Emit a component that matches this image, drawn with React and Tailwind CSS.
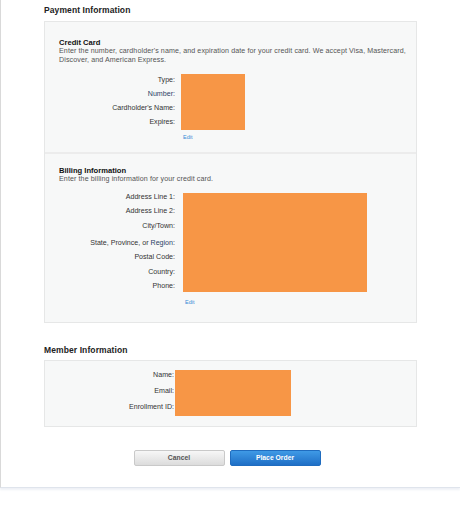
import React from 'react';

const font = { fontFamily: '"Liberation Sans", Arial, sans-serif' };

function Orange({ className }) {
  return <div className={`bg-[#f79646] ${className}`} />;
}

function Labels({ items, className = '' }) {
  return (
    <div className={`flex flex-col items-end text-[7.1px] text-[#333] ${className}`}>
      {items.map(([label, cls], i) => (
        <div key={i} className={`flex items-center ${cls}`}>{label}</div>
      ))}
    </div>
  );
}

function Edit({ className = 'mt-[4px]' }) {
  return <div className={`text-[5.5px] text-[#3a8ad6] ml-[2px] leading-none ${className}`}>Edit</div>;
}

export default function App() {
  return (
    <div className="w-[460px] h-[531px] bg-white" style={font}>
      <div className="h-[488px] border-l border-l-[#d9d9d9] border-b border-b-[#dfe4ec] shadow-[0_2px_2px_#eef1f6] pl-[43px] pr-[43px]">
        {/* payment */}
        <h2 className="pt-[5px] h-[21px] text-[8.5px] font-bold tracking-[0.1px] text-[#222] leading-[10px]">Payment Information</h2>

        <div className="border border-[#e6e7e7] bg-[#f7f8f8]">
          {/* credit card */}
          <div className="px-[14px] pt-[16px] h-[130px]">
            <div className="text-[7.6px] font-bold text-[#111] leading-[9px]">Credit Card</div>
            <p className="text-[7.1px] tracking-[0.1px] text-[#555] leading-[9px] w-[355px]">
              Enter the number, cardholder's name, and expiration date for your credit card. We accept Visa, Mastercard, Discover, and American Express.
            </p>
            <div className="flex mt-[8px]">
              <Labels
                className="w-[116px]"
                items={[['Type:', 'h-[14px]'], ['Number:', 'h-[14px] text-[#2b3f66]'], ["Cardholder's Name:", 'h-[14px]'], ['Expires:', 'h-[15px]']]}
              />
              <div className="ml-[6px] pt-[1px]">
                <Orange className="w-[64px] h-[56px]" />
                <Edit className="mt-[5px]" />
              </div>
            </div>
          </div>
          <div className="h-[2px] bg-[#ececec]" />
          {/* billing */}
          <div className="px-[14px] pt-[12px] h-[168px]">
            <div className="text-[7.6px] font-bold text-[#111] leading-[9px]">Billing Information</div>
            <p className="text-[7.1px] tracking-[0.1px] text-[#555] leading-[9px]">Enter the billing information for your credit card.</p>
            <div className="flex mt-[6px]">
              <Labels
                className="w-[116px]"
                items={[
                  ['Address Line 1:', 'h-[14.5px]'],
                  ['Address Line 2:', 'h-[14.5px]'],
                  ['City/Town:', 'h-[14.5px]'],
                  [<span>State, Province, or <span className="text-[#2b3f66]">Region</span>:</span>, 'h-[17px] pt-[3px]'],
                  ['Postal Code:', 'h-[14.5px]'],
                  ['Country:', 'h-[14.5px]'],
                  ['Phone:', 'h-[14.5px]'],
                ]}
              />
              <div className="ml-[8px] pt-[3px]">
                <Orange className="w-[184px] h-[99px]" />
                <Edit className="mt-[8px]" />
              </div>
            </div>
          </div>
        </div>

        {/* member */}
        <h2 className="mt-[22px] h-[11px] text-[8.5px] font-bold tracking-[0.1px] text-[#222] leading-[10px]">Member Information</h2>
        <div className="mt-[4px] border border-[#e6e7e7] bg-[#f7f8f8] h-[67px] px-[14px] pt-[6px]">
          <div className="flex">
            <Labels
              className="w-[115px]"
              items={[['Name:', 'h-[16px]'], ['Email:', 'h-[16px]'], ['Enrollment ID:', 'h-[16px]']]}
            />
            <div className="ml-[1px] pt-[3px]">
              <Orange className="w-[116px] h-[46px]" />
            </div>
          </div>
        </div>

        {/* buttons */}
        <div className="flex justify-center gap-[5px] mt-[23px] pr-[7px]">
          <button className="w-[91px] h-[16px] rounded-[2px] border border-[#c9c9c9] bg-gradient-to-b from-[#f7f7f7] to-[#dcdcdc] text-[6.8px] font-bold text-[#555]">Cancel</button>
          <button className="w-[91px] h-[16px] rounded-[2px] border border-[#1f6cbf] bg-gradient-to-b from-[#3f9ae6] to-[#1f6fc6] text-[6.8px] font-bold text-white">Place Order</button>
        </div>
      </div>
    </div>
  );
}
